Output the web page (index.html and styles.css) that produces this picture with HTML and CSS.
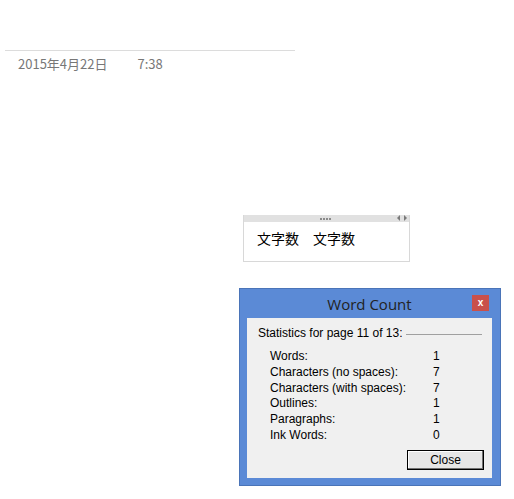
FILE: index.html
```html
<!DOCTYPE html>
<html lang="ja">
  <head>
    <meta charset="UTF-8" />
    <title>Word Count</title>
    <link rel="stylesheet" href="styles.css">
  </head>
  <body>
    <div class="page">
      <div class="note_header">
        <span class="note_date">2015年4月22日</span>
        <span class="note_time">7:38</span>
      </div>

      <!-- note container -->
      <div class="note_box">
        <div class="note_handle">
          <span class="dots">
            <i></i><i></i><i></i><i></i>
          </span>
          <span class="arrows">
            <svg width="10" height="6" viewBox="0 0 10 6" fill="#7a7a7a">
              <path d="M3 0 L0 3 L3 6 Z" />
              <path d="M7 0 L10 3 L7 6 Z" />
            </svg>
          </span>
        </div>
        <div class="note_text">文字数　文字数</div>
      </div>

      <!-- word count dialog -->
      <div class="dialog">
        <div class="dialog_title">
          <span>Word Count</span>
          <button class="close_x">x</button>
        </div>
        <div class="dialog_body">
          <div class="stats_head">
            <span>Statistics for page 11 of 13:</span>
            <span class="rule"></span>
          </div>
          <div class="stats">
            <div class="row"><span>Words:</span><span>1</span></div>
            <div class="row"><span>Characters (no spaces):</span><span>7</span></div>
            <div class="row"><span>Characters (with spaces):</span><span>7</span></div>
            <div class="row"><span>Outlines:</span><span>1</span></div>
            <div class="row"><span>Paragraphs:</span><span>1</span></div>
            <div class="row"><span>Ink Words:</span><span>0</span></div>
          </div>
          <div class="btn_group">
            <button class="close_btn">Close</button>
          </div>
        </div>
      </div>
    </div>
  </body>
</html>
```

FILE: styles.css
```css
body {
  margin: 0;
  background: #fff;
  font-family: "Liberation Sans", "Noto Sans CJK JP", sans-serif;
}

.page {
  position: relative;
  width: 514px;
  height: 499px;
  padding-top: 50px;
  box-sizing: border-box;
}

.note_header {
  margin-left: 5px;
  width: 290px;
  border-top: 1px solid #dcdcdc;
  padding: 3px 0 0 13px;
  box-sizing: border-box;
  color: #777;
  font-size: 13px;
  font-family: "Noto Sans CJK JP", sans-serif;
  display: flex;
  gap: 30px;
}

.note_box {
  position: absolute;
  left: 243px;
  top: 215px;
  width: 167px;
  height: 47px;
  box-sizing: border-box;
  border: 1px solid #d8d8d8;
  border-top: none;
}

.note_handle {
  height: 7px;
  background: #e1e1e1;
  position: relative;
}

.note_handle .dots {
  position: absolute;
  left: 76px;
  top: 3px;
  display: flex;
  gap: 1px;
}

.note_handle .dots i {
  width: 2px;
  height: 2px;
  background: #8a8a8a;
}

.note_handle .arrows {
  position: absolute;
  right: 2px;
  top: 0;
  line-height: 0;
}

.note_text {
  padding: 6px 0 0 13px;
  font-size: 14px;
  font-family: "Noto Sans CJK JP", sans-serif;
  color: #000;
  line-height: 20px;
}

.dialog {
  position: absolute;
  left: 239px;
  top: 288px;
  width: 262px;
  background: #5b8ad6;
  border: 1px solid #4a74b8;
  box-sizing: border-box;
  padding: 0 8px 7px 7px;
}

.dialog_title {
  height: 29px;
  display: flex;
  align-items: center;
  justify-content: center;
  position: relative;
  font-family: "Open Sans", sans-serif;
  font-size: 15px;
  color: #222;
}

.close_x {
  position: absolute;
  right: 3px;
  top: 6px;
  width: 17px;
  height: 16px;
  border: none;
  background: #c9504b;
  color: #fff;
  font-size: 10px;
  font-weight: bold;
  padding: 0;
  line-height: 14px;
  font-family: "Liberation Sans", sans-serif;
}

.dialog_body {
  background: #f0f0f0;
  height: 160px;
  box-sizing: border-box;
  padding: 8px 8px 0 11px;
  font-size: 12px;
  color: #000;
}

.stats_head {
  display: flex;
  align-items: center;
  gap: 3px;
}

.stats_head .rule {
  flex: 1;
  border-top: 1px solid #a0a0a0;
  margin: 2px 2px 0 0;
}

.stats {
  padding: 9px 0 0 12px;
}

.row {
  display: flex;
  height: 15.8px;
  line-height: 15.8px;
}

.row span:first-child {
  width: 163px;
}

.btn_group {
  display: flex;
  justify-content: flex-end;
  padding-top: 6px;
}

.close_btn {
  width: 77px;
  height: 20px;
  background: #e6e6e6;
  border: 1px solid #000;
  box-shadow: inset -1px -1px 0 #707070, inset 1px 1px 0 #fff;
  font-family: "Liberation Sans", sans-serif;
  font-size: 12px;
  padding: 0;
}
```
